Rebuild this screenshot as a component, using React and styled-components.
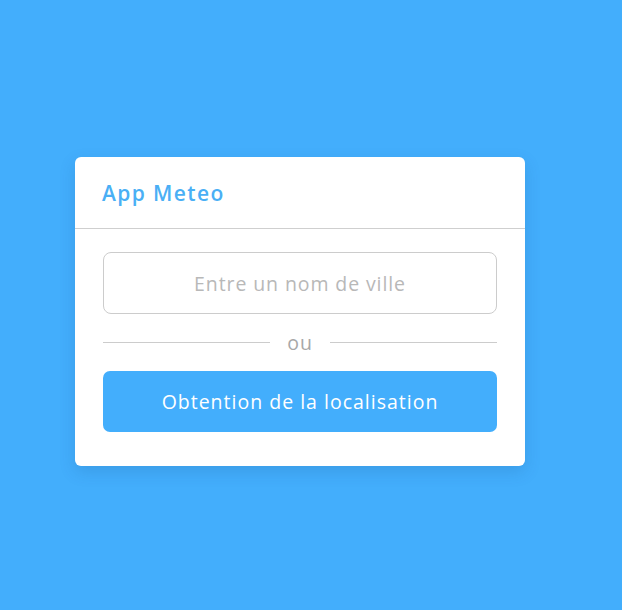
import React from "react";
import styled, { createGlobalStyle } from "styled-components";

const GlobalStyle = createGlobalStyle`
  html, body {
    margin: 0;
    padding: 0;
    height: 100%;
    background: #43aefc;
    font-family: "Open Sans", "Noto Sans", sans-serif;
  }
  * {
    box-sizing: border-box;
  }
`;

const Page = styled.div`
  min-height: 610px;
  padding: 157px 0 0 75px;
`;

const Card = styled.div`
  width: 450px;
  background: #ffffff;
  border-radius: 6px;
  box-shadow: 0 6px 16px rgba(20, 80, 140, 0.18);
`;

const Header = styled.h1`
  margin: 0;
  height: 72px;
  padding: 0 27px;
  display: flex;
  align-items: center;
  font-size: 21px;
  font-weight: 600;
  letter-spacing: 1.4px;
  color: #4aaff5;
  border-bottom: 1px solid #cfcfcf;
`;

const Body = styled.div`
  padding: 23px 28px 34px;
  display: flex;
  flex-direction: column;
`;

const CityInput = styled.input`
  height: 62px;
  width: 100%;
  border: 1px solid #cccccc;
  border-radius: 8px;
  text-align: center;
  font-family: inherit;
  font-size: 19.5px;
  letter-spacing: 0.9px;
  outline: none;
  color: #555;

  &::placeholder {
    color: #b8b8b8;
  }
`;

const Separator = styled.div`
  display: flex;
  align-items: center;
  gap: 17px;
  height: 57px;
  color: #a8a8a8;
  font-size: 19.5px;
  letter-spacing: 0.9px;

  &::before,
  &::after {
    content: "";
    flex: 1;
    height: 1px;
    background: #cccccc;
  }
`;

const LocateButton = styled.button`
  height: 61px;
  width: 100%;
  border: none;
  border-radius: 7px;
  background: #43aefc;
  color: #ffffff;
  font-family: inherit;
  font-size: 19.5px;
  letter-spacing: 1px;
  cursor: pointer;
`;

export default function App() {
  return (
    <>
      <GlobalStyle />
      <Page>
        <Card>
          <Header>App Meteo</Header>
          <Body>
            <CityInput type="text" placeholder="Entre un nom de ville" />
            <Separator>ou</Separator>
            <LocateButton>Obtention de la localisation</LocateButton>
          </Body>
        </Card>
      </Page>
    </>
  );
}
